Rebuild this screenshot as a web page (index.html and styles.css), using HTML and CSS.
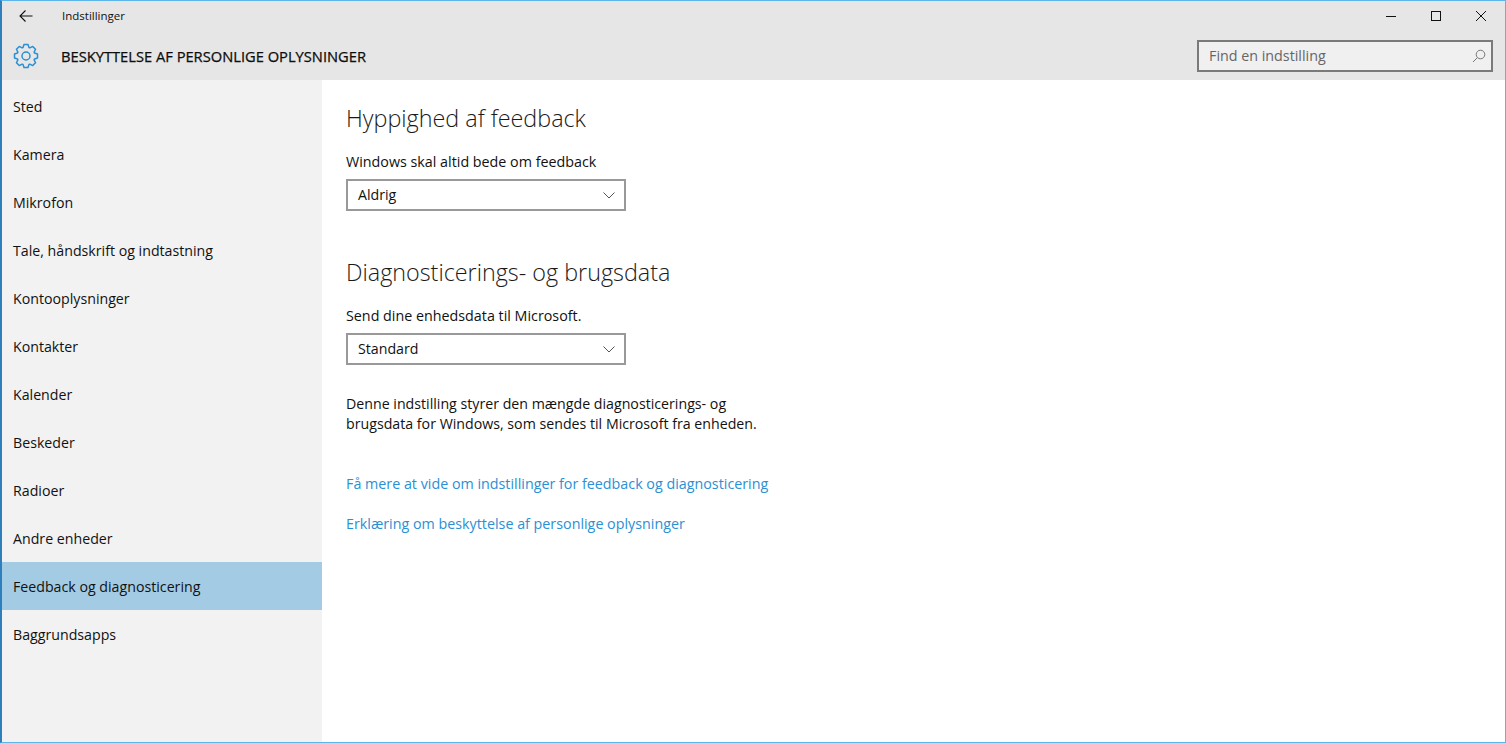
FILE: index.html
```html
<!DOCTYPE html>
<html lang="da">
<head>
<meta charset="utf-8">
<title>Indstillinger</title>
<link rel="stylesheet" href="styles.css">
</head>
<body>
<div class="window">
  <header class="header">
    <div class="titlebar">
      <button class="back" aria-label="Tilbage">
        <svg width="16" height="16" viewBox="0 0 16 16"><path d="M14.5 8H2M7.5 2.5 2 8l5.5 5.5" fill="none" stroke="#111" stroke-width="1.1"/></svg>
      </button>
      <span class="app-name">Indstillinger</span>
      <div class="controls">
        <svg width="12" height="12" viewBox="0 0 12 12"><path d="M1 6.5h10" stroke="#111" fill="none"/></svg>
        <svg width="12" height="12" viewBox="0 0 12 12"><rect x="1.5" y="1.5" width="9" height="9" stroke="#111" fill="none"/></svg>
        <svg width="12" height="12" viewBox="0 0 12 12"><path d="M1 1l10 10M11 1 1 11" stroke="#111" fill="none"/></svg>
      </div>
    </div>
    <div class="pagebar">
      <svg class="gear" width="26" height="26" viewBox="0 0 26 26"><polygon points="11,1.5 15,1.5 16,4.5 16.89,4.87 19.72,3.45 22.55,6.28 21.13,9.11 21.5,10 24.5,11 24.5,15 21.5,16 21.13,16.89 22.55,19.72 19.72,22.55 16.89,21.13 16,21.5 15,24.5 11,24.5 10,21.5 9.11,21.13 6.28,22.55 3.45,19.72 4.87,16.89 4.5,16 1.5,15 1.5,11 4.5,10 4.87,9.11 3.45,6.28 6.28,3.45 9.11,4.87 10,4.5" fill="none" stroke="#2a8fd4" stroke-width="1.5" stroke-linejoin="round"/><circle cx="13" cy="13" r="4" fill="none" stroke="#2a8fd4" stroke-width="1.5"/></svg>
      <h1 class="page-title">BESKYTTELSE AF PERSONLIGE OPLYSNINGER</h1>
      <div class="search">
        <span>Find en indstilling</span>
        <svg width="14" height="14" viewBox="0 0 14 14"><circle cx="8.500" cy="5.500" r="4.300" fill="none" stroke="#777"/><path d="M5.500 8.500 1 13" stroke="#777" fill="none"/></svg>
      </div>
    </div>
  </header>
  <div class="body">
    <nav class="sidebar">
      <a class="item">Sted</a>
      <a class="item">Kamera</a>
      <a class="item">Mikrofon</a>
      <a class="item">Tale, håndskrift og indtastning</a>
      <a class="item">Kontooplysninger</a>
      <a class="item">Kontakter</a>
      <a class="item">Kalender</a>
      <a class="item">Beskeder</a>
      <a class="item">Radioer</a>
      <a class="item">Andre enheder</a>
      <a class="item selected">Feedback og diagnosticering</a>
      <a class="item">Baggrundsapps</a>
    </nav>
    <main class="content">
      <h2 class="heading">Hyppighed af feedback</h2>
      <p class="label">Windows skal altid bede om feedback</p>
      <div class="select">
        <span>Aldrig</span>
        <svg width="12" height="7" viewBox="0 0 12 7"><path d="M.5.500 6 6l5.500-5.500" fill="none" stroke="#555"/></svg>
      </div>
      <h2 class="heading second">Diagnosticerings- og brugsdata</h2>
      <p class="label">Send dine enhedsdata til Microsoft.</p>
      <div class="select">
        <span>Standard</span>
        <svg width="12" height="7" viewBox="0 0 12 7"><path d="M.5.500 6 6l5.500-5.500" fill="none" stroke="#555"/></svg>
      </div>
      <p class="desc">Denne indstilling styrer den mængde diagnosticerings- og<br>brugsdata for Windows, som sendes til Microsoft fra enheden.</p>
      <a class="link first">Få mere at vide om indstillinger for feedback og diagnosticering</a>
      <a class="link">Erklæring om beskyttelse af personlige oplysninger</a>
    </main>
  </div>
</div>
</body>
</html>
```
FILE: styles.css
```css
* { box-sizing: border-box; }
html, body { margin: 0; height: 100%; }
body { font-family: "Open Sans", "Noto Sans", sans-serif; font-size: 14px; color: #111; overflow: hidden; }
.window { width: 1506px; height: 743px; border: 1px solid #5cb6ec; border-left-width: 2px; border-left-color: #2f7fbd; display: flex; flex-direction: column; background: #fff; }
.header { height: 79px; background: #e6e6e6; flex: none; display: flex; flex-direction: column; }
.titlebar { height: 30px; display: flex; align-items: center; }
.back { width: 16px; height: 16px; margin-left: 16px; padding: 0; border: 0; background: none; display: flex; }
.app-name { margin-left: 28px; font-size: 11.500px; padding-bottom: 2px; }
.controls { margin-left: auto; display: flex; gap: 33px; margin-right: 18px; }
.pagebar { flex: 1; display: flex; align-items: center; }
.gear { margin-left: 11px; }
.page-title { margin: 0 0 0 22px; font-size: 14.700px; font-weight: 400; -webkit-text-stroke: .25px #000; }
.search { margin-left: auto; margin-right: 12px; width: 296px; height: 32px; border: 2px solid #7a7a7a; background: #f0f0f0; display: flex; align-items: center; justify-content: space-between; padding: 0 5px 0 10px; color: #666; font-size: 14.300px; }
.body { flex: 1; display: flex; min-height: 0; }
.sidebar { width: 320px; background: #f2f2f2; padding-top: 2px; display: flex; flex-direction: column; }
.item { height: 48px; display: flex; align-items: center; padding-left: 11px; font-size: 14.200px; }
.selected { background: #a3cbe3; }
.content { flex: 1; padding: 20px 0 0 24px; }
.heading { margin: 0; font-size: 23.350px; font-weight: 300; line-height: 36px; color: #1a1a1a; }
.heading.second { margin-top: 43px; }
.label { margin: 16px 0 0; font-size: 14.300px; line-height: 20px; }
.select { margin-top: 7px; width: 280px; height: 32px; border: 2px solid #999; display: flex; align-items: center; justify-content: space-between; padding: 0 9px 0 10px; font-size: 14.200px; }
.select span { padding-bottom: 2px; }
.desc { margin: 29px 0 0; font-size: 14.200px; line-height: 20px; }
.link { display: block; color: #2a90d4; font-size: 14.300px; line-height: 20px; margin-top: 20px; }
.link.first { margin-top: 40px; }
```
